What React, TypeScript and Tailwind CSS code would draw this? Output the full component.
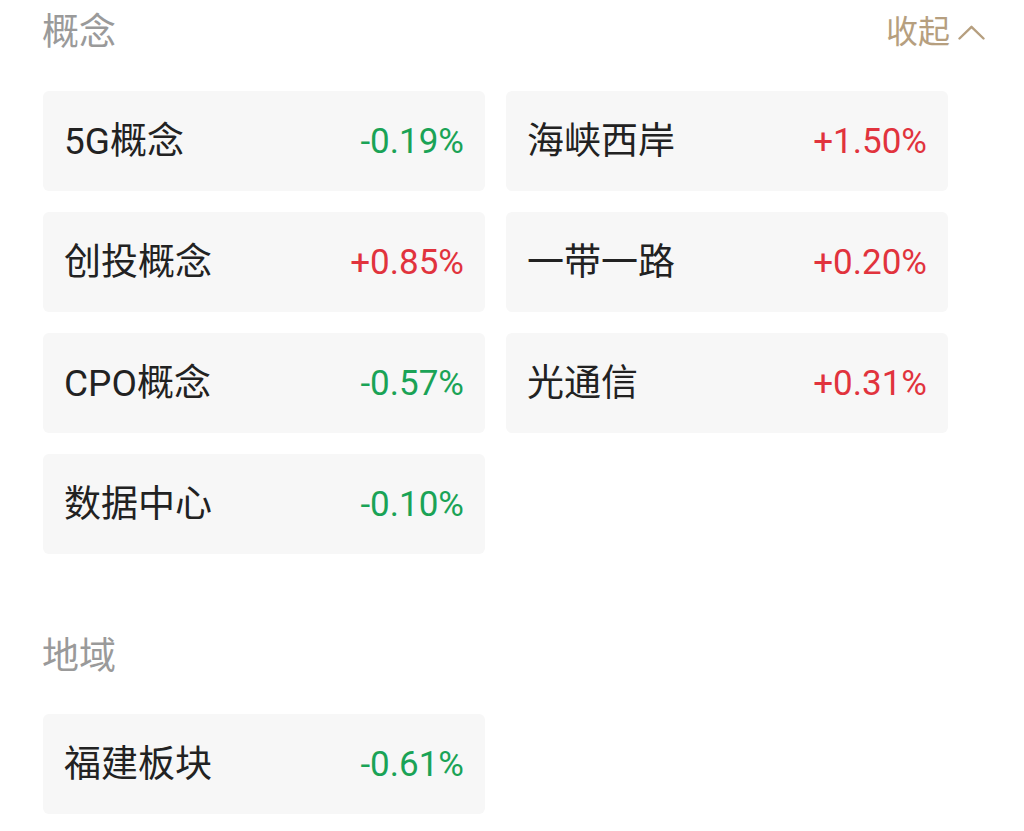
import React from 'react';

type Item = { name: string; change: string };

const concepts: Item[] = [
  { name: '5G概念', change: '-0.19%' },
  { name: '海峡西岸', change: '+1.50%' },
  { name: '创投概念', change: '+0.85%' },
  { name: '一带一路', change: '+0.20%' },
  { name: 'CPO概念', change: '-0.57%' },
  { name: '光通信', change: '+0.31%' },
  { name: '数据中心', change: '-0.10%' },
];

const regions: Item[] = [{ name: '福建板块', change: '-0.61%' }];

const font = { fontFamily: 'Roboto, "Noto Sans CJK SC", sans-serif' };

const Card: React.FC<Item> = ({ name, change }) => {
  const up = change.startsWith('+');
  return (
    <div className="h-[100px] rounded-[6px] bg-[#f7f7f7] pl-[21px] pr-[21px] flex items-center justify-between">
      <span className="text-[37px] text-[#222222] leading-none">{name}</span>
      <span className={`text-[35px] leading-none ${up ? 'text-[#e1333d]' : 'text-[#1aa356]'}`}>{change}</span>
    </div>
  );
};

const App: React.FC = () => {
  return (
    <div className="w-[1024px] h-[831px] bg-white overflow-hidden pl-[43px] pr-[39px]" style={font}>
      <div className="h-[64px] flex items-center justify-between">
        <h2 className="-ml-[1px] text-[37px] text-[#9a9a9a] leading-none">概念</h2>
        <button className="flex items-center gap-[8px] text-[32px] text-[#b69f7f] leading-none">
          收起
          <svg width="27" height="15" viewBox="0 0 27 15" fill="none" stroke="#b69f7f" strokeWidth="2.4" strokeLinecap="round" strokeLinejoin="round">
            <path d="M1.5 13.5 L13.5 1.8 L25.5 13.5" />
          </svg>
        </button>
      </div>
      <div className="mt-[27px] grid grid-cols-[442px_442px] gap-x-[21px] gap-y-[21px]">
        {concepts.map((c) => (
          <Card key={c.name} {...c} />
        ))}
      </div>

      <div className="mt-[70px] h-[64px] flex items-center">
        <h2 className="-ml-[1px] text-[37px] text-[#9a9a9a] leading-none">地域</h2>
      </div>
      <div className="mt-[26px] grid grid-cols-[442px_442px] gap-x-[21px] gap-y-[21px]">
        {regions.map((c) => (
          <Card key={c.name} {...c} />
        ))}
      </div>
    </div>
  );
};

export default App;
